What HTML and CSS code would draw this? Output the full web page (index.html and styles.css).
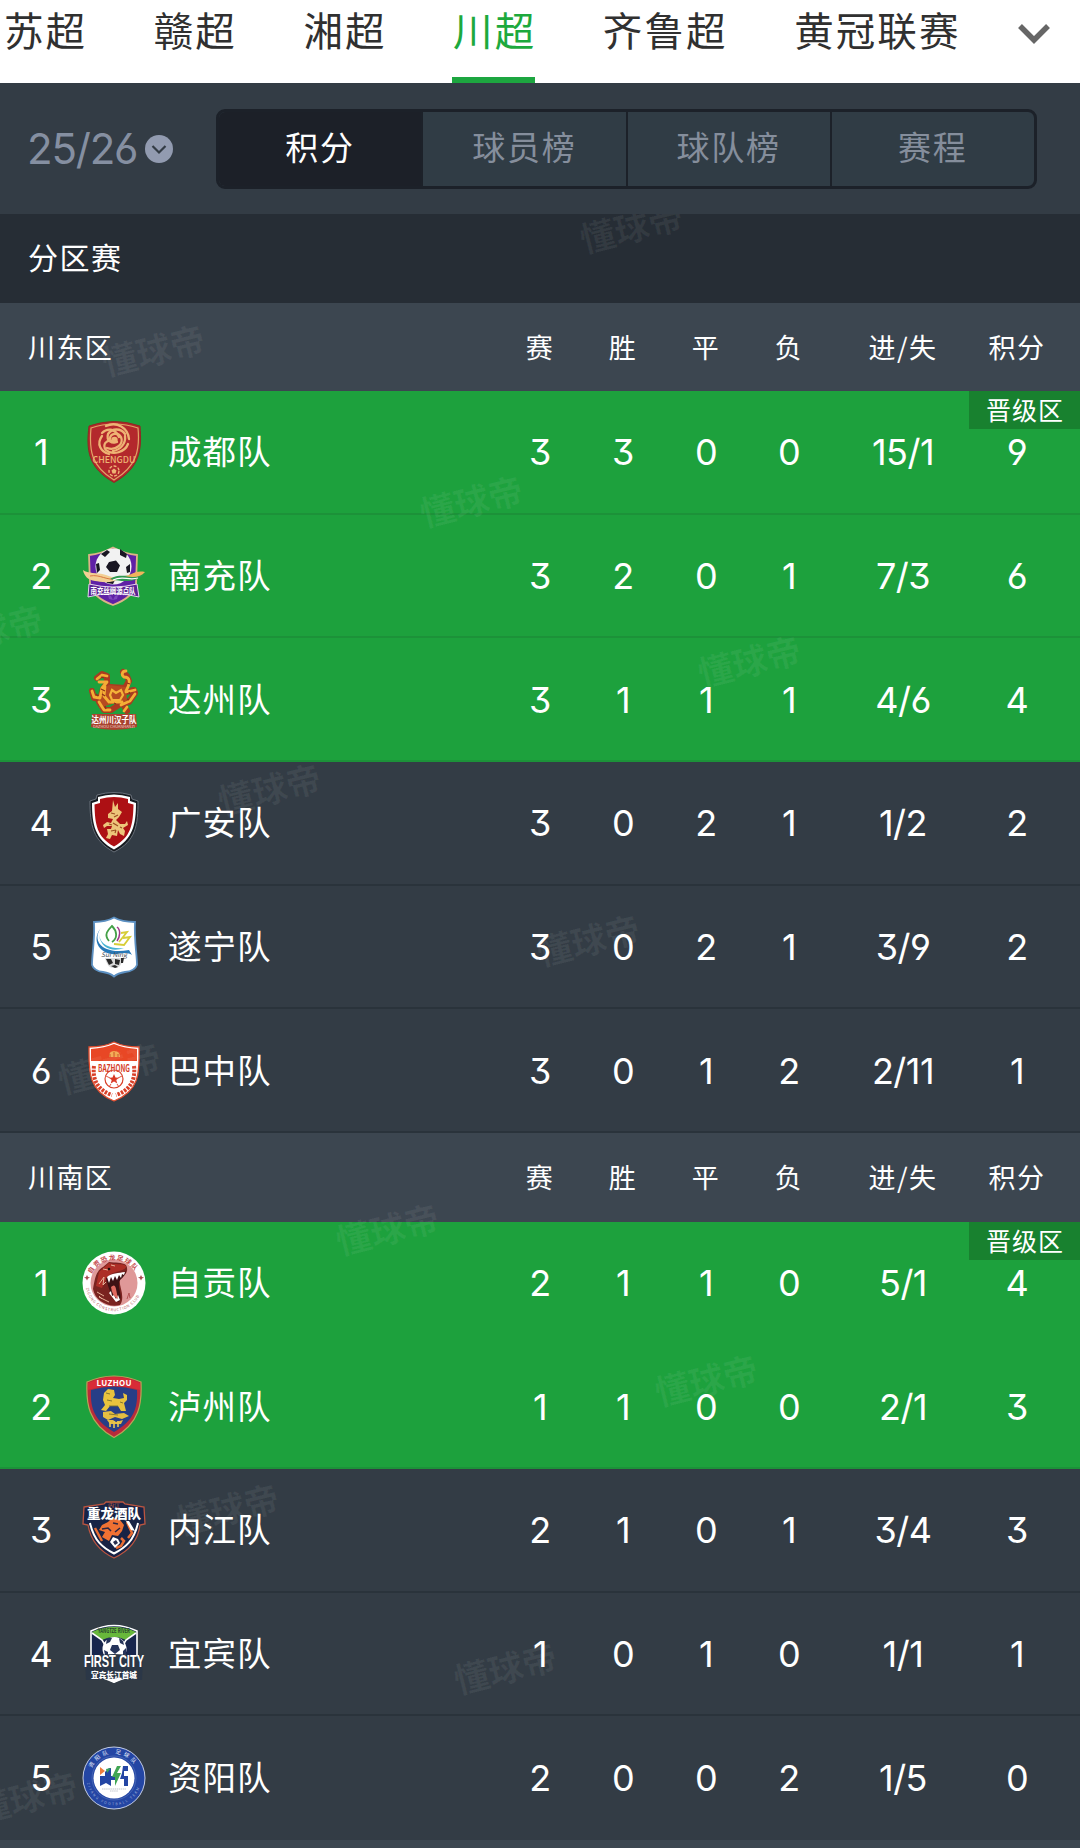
FILE: index.html
```html
<!DOCTYPE html>
<html lang="zh-CN">
<head>
    <meta charset="UTF-8" />
    <title>川超积分榜</title>
    <link rel="stylesheet" href="styles.css">
</head>
<body>

    <nav class="tabs">
        <a class="tab">苏超</a>
        <a class="tab">赣超</a>
        <a class="tab">湘超</a>
        <a class="tab active">川超</a>
        <a class="tab">齐鲁超</a>
        <a class="tab">黄冠联赛</a>
        <svg class="more" viewBox="0 0 34 22"><path d="M3 3 L17 17 L31 3" fill="none" stroke="#666" stroke-width="5.5" /></svg>
    </nav>

    <div class="filter">
        <div class="season">
            <span>25/26</span>
            <svg viewBox="0 0 28 28"><circle cx="14" cy="14" r="14" fill="#929bb0" /><path d="M7.5 11 L14 17.5 L20.5 11" fill="none" stroke="#333c45" stroke-width="2.2" /></svg>
        </div>
        <div class="segment">
            <span class="on">积分</span>
            <span>球员榜</span>
            <span>球队榜</span>
            <span>赛程</span>
        </div>
    </div>

    <main class="board">
        <h2 class="stage">分区赛</h2>

        <section class="group">
            <div class="head">
                <span class="zone">川东区</span>
                <span>赛</span><span>胜</span><span>平</span><span>负</span><span>进/失</span><span>积分</span>
            </div>

            <div class="row up">
                <span class="rank">1</span>
                <svg class="crest" viewBox="0 0 64 64">
                    <path d="M7 6 Q32 -3 58 6 C60 30 58 48 32 62.5 C6 48 4 30 7 6Z" fill="#b3282c" stroke="#8e2a22" />
                    <path d="M9 8 Q32 0 56 8 C58 30 55 46 32 60 C9 46 7 30 9 8Z" fill="none" stroke="#e0a467" stroke-width="1.2" />
                    <g fill="none" stroke="#eeb374" stroke-width="2.3" stroke-linecap="round">
                        <path d="M28 19 C28 13 36 12 39 17 C42 24 34 31 25 28" />
                        <path d="M35 22 C30 24 24 21 26 14 C30 8 39 8 43 14" />
                        <path d="M31 21 C24 19 20 25 24 30 C31 36 43 32 46 24" />
                        <path d="M37 17 C33 8 25 8 20 13" />
                        <path d="M20 16 C14 24 19 32 27 34" />
                        <path d="M24 6 C35 1 46 8 47 19" />
                        <path d="M43 16 C44 24 38 30 31 31" />
                    </g>
                    <circle cx="32.5" cy="20" r="3.2" fill="#eeb374" />
                    <text x="32" y="43" font-size="9" font-weight="500" textLength="43" lengthAdjust="spacingAndGlyphs" fill="#eeb374">CHENGDU</text>
                    <circle cx="32" cy="51" r="5" fill="none" stroke="#eeb374" stroke-width="1.4" stroke-dasharray="3 1.5" />
                    <path d="M32 48.5 l2.5 2 -1 3 h-3 l-1 -3z" fill="#eeb374" />
                </svg>
                <span class="name">成都队</span>
                <span>3</span><span>3</span><span>0</span><span>0</span><span>15/1</span><span>9</span>
                <em class="badge">晋级区</em>
            </div>

            <div class="row up">
                <span class="rank">2</span>
                <svg class="crest" viewBox="0 0 64 64">
                    <path d="M7 11 Q19 10 31 3.500 Q43 10 55 11 L54 40 Q52 53 31 61 Q10 53 8 40Z" fill="#5f20a6" stroke="#dcb487" stroke-width="1.8" />
                    <circle cx="31.5" cy="22.5" r="18" fill="#f2f2f2" />
                    <path d="M27 18 l7 -1.500 4 5 -3 6.500 -7 0 -4 -5z M19 10 l6 -4 3 2 -5 5z M38 5 l7 5 -1 4 -6 -3z M14 20 l3 -1 1 7 -3 3z M48 20 l-4 3 1 6 3 -1z M23 36 l6 -2 4 2 -2 4 -6 -1z" fill="#191622" />
                    <path d="M1 26 C6 30 14 28 24 31 C30 33 34 35 39 34 C30 40 19 38 13 37 C6 36 2 32 1 26Z" fill="#f2cf93" />
                    <path d="M8 32 C18 30 25 37 36 35" fill="none" stroke="#d97842" stroke-width="1" />
                    <path d="M28 35 C38 29 44 34 62 31 C55 37 44 39 28 35Z" fill="#2f9850" />
                    <path d="M43 32 C50 31 53 26 63 28 C59 33 52 34 43 32Z" fill="#f0b45c" />
                    <path d="M31 36 C41 31 46 37 56 34" fill="none" stroke="#fff" stroke-width="1.2" />
                    <path d="M7 40 Q31 46 55 40 L57 53 Q31 46 6 53Z" fill="#5a2493" stroke="#e6d4ef" stroke-width="1" />
                    <text x="31" y="49.5" font-size="8" font-weight="700" textLength="45" lengthAdjust="spacingAndGlyphs" fill="#fff">南充丝绸源点队</text>
                    <path d="M26 51 l3 1 2 4 -4 -1z M36 51 l-3 1 -2 4 4 -1z" fill="#7c45bd" />
                </svg>
                <span class="name">南充队</span>
                <span>3</span><span>2</span><span>0</span><span>1</span><span>7/3</span><span>6</span>
            </div>

            <div class="row up">
                <span class="rank">3</span>
                <svg class="crest" viewBox="0 0 64 64">
                    <g fill="none" stroke="#a93b20" stroke-width="6" stroke-linecap="round" stroke-linejoin="round">
                        <path d="M15 10 L20 6 L25 8 L25 15 L21 21 L18 31 L12 30 L10 23" />
                        <path d="M24 24 L28 19 L43 20 L47 13 L45 8 L41 4 M44 24 L52 22 L53 25 L47 34 L41 36 L45 43 M17 34 L22 42 L29 42 L40 35" />
                    </g>
                    <path d="M17 25 L27 17 L44 19 L45 33 L30 36 L17 40Z" fill="#b64a20" />
                    <g fill="none" stroke="#f4ae35" stroke-width="2.8" stroke-linecap="round" stroke-linejoin="round">
                        <path d="M15 11 L20 7 L25 8 M17 14 L25 14 L20 20 L18 30 L12 29 L10 23 M23 18 L22 28 L27 34" />
                        <path d="M44 23 C49 14 48 9 42 9 C39 7 40 3 44 3" />
                        <path d="M44 24 L53 22 M53 26 L48 33 L39 37 M45 39 L42 43 M17 34 L22 42 L28 42 M28 34 L40 34" />
                    </g>
                    <path d="M30 22 l4 3 5 -3 2 5 -3 5 -8 0 -2 -5z" fill="none" stroke="#f4b239" stroke-width="2.2" />
                    <path d="M19 9 l3 1 M19 21 l4 2 M20 26 l3 2 M14 26 l2 2 M47 24 l1 2 M45 15 l3 1 M32 35 l2 1 M23 38 l1 3 M45 31 l2 1" stroke="#8e3218" stroke-width="1.3" />
                    <path d="M10 46 H54 L55 59 Q32 65 9 59Z" fill="#a9432f" />
                    <text x="32" y="54.5" font-size="9" font-weight="700" textLength="45" lengthAdjust="spacingAndGlyphs" fill="#fff">达州川汉子队</text>
                    <text x="32" y="60" font-size="3.5" textLength="42" lengthAdjust="spacingAndGlyphs" fill="#f0d5cc">DAZHOU CHUANHANZI</text>
                </svg>
                <span class="name">达州队</span>
                <span>3</span><span>1</span><span>1</span><span>1</span><span>4/6</span><span>4</span>
            </div>

            <div class="row">
                <span class="rank">4</span>
                <svg class="crest" viewBox="0 0 64 64">
                    <path d="M15 4 Q32 -1 49 4 L50 8 L56 10 C56 34 54 50 32 61 C11 50 8 34 8 10 L14 8Z" fill="#171b20" stroke="#78808a" stroke-width=".8" />
                    <path d="M16 6 Q32 1 48 6 L48 10 L54 12 C54 34 51 48 32 58.500 C13 48 10 34 10 12 L16 10Z" fill="#fff" />
                    <path d="M18 8 Q32 4 46 8 L46 12 L51.500 13.500 C51 34 49 46 32 55.500 C15 46 13 34 12.500 13.500 L18 12Z" fill="#ad1014" />
                    <path d="M31 9 L33 16 L36 12 L36 18 L40 21 L37 26 L34 29 L38 33 L43 33 L45 30 L46 34 L41 37 L43 40 L42 45 L38 43 L36 39 L35 45 L30 44 L28 48 L24 47 L26 43 L25 38 L29 38 L30 35 L25 35 L22 37 L21 34 L25 31 L29 32 L31 28 L26 27 L26 23 L30 20Z" fill="#edc57a" />
                    <path d="M29 22 l4 1 M32 26 l4 -2 M31 32 l5 3 M29 40 l5 -1 M27 33 l3 1 M38 36 l2 1 M33 42 l1 -3" stroke="#9a4d20" stroke-width="1.2" />
                </svg>
                <span class="name">广安队</span>
                <span>3</span><span>0</span><span>2</span><span>1</span><span>1/2</span><span>2</span>
            </div>

            <div class="row">
                <span class="rank">5</span>
                <svg class="crest" viewBox="0 0 64 64">
                    <path d="M12 7 Q24 7 32 2.500 Q40 7 53 7 C52 26 55 39 55 50 Q53 56 43 57 Q36 58 32 61.500 Q28 58 21 57 Q12 56 10 50 C10 38 13 25 12 7Z" fill="#fff" stroke="#5c90c2" stroke-width="1.8" />
                    <path d="M19 13 C9 26 21 40 47 35 L50 40 C43 35 36 41 27 38.500 C14 35 11 22 19 13Z" fill="#2879b8" />
                    <path d="M17 20 C19 31 30 34 42 33 C31 37 19 34 17 20Z" fill="#45b2d3" />
                    <path d="M27 26 C21 19 27 14 30 11 C35 16 36 23 30 27" fill="none" stroke="#43a047" stroke-width="1.8" />
                    <path d="M35 12 C39 15 38 22 35 26" fill="none" stroke="#a0358a" stroke-width="1.5" />
                    <path d="M39 18 L45 17 L37 27 M41 23 L48 22 L42 30 L32 29" fill="none" stroke="#d6cd37" stroke-width="1.8" />
                    <text x="32" y="42" font-size="6.5" font-style="italic" textLength="26" lengthAdjust="spacingAndGlyphs" fill="#4a5058">Sui Ning</text>
                    <path d="M23 43 H41 Q40 53 32 53 Q25 53 23 43Z" fill="#dadada" />
                    <path d="M24 44 l5 0 2 4 -4 2z M33 44 l5 1 -1 5 -4 -1z M39 43 l3 0 -1 5 -2 0z M29 51 l4 -1 3 2 -3 1z" fill="#292929" />
                </svg>
                <span class="name">遂宁队</span>
                <span>3</span><span>0</span><span>2</span><span>1</span><span>3/9</span><span>2</span>
            </div>

            <div class="row">
                <span class="rank">6</span>
                <svg class="crest" viewBox="0 0 64 64">
                    <path d="M7 8 Q22 8 32 3 Q42 8 57 8 C57 30 60 51 32 62 C5 51 7 30 7 8Z" fill="#fff" stroke="#e34c2c" stroke-width="1.3" />
                    <path d="M9 10 Q23 9 32 5 Q41 9 55 10 L55 22 H9Z" fill="#e84725" />
                    <path d="M27 18 q0 -6 5 -6 q6 0 6 6z" fill="#f3a84f" />
                    <path d="M28 18 v-3 M32 18 v-5 M36 18 v-3" stroke="#bd3d20" stroke-width=".8" />
                    <circle cx="32" cy="40" r="9" fill="#fff" stroke="#d94028" stroke-width="1.2" />
                    <text x="32" y="33" font-size="10" font-weight="700" textLength="32" lengthAdjust="spacingAndGlyphs" fill="#d53c25">BAZHONG</text>
                    <path d="M32 35 l1.500 3.500 3.500 .3 -2.700 2.200 1 3.600 -3.300 -2 -3.300 2 1 -3.600 -2.700 -2.200 3.500 -.3z" fill="#d93622" />
                    <path d="M24 37 l4 2 M40 37 l-4 2 M27 48 l2 -3 M37 48 l-2 -3" stroke="#d94028" stroke-width=".9" />
                    <path d="M12 27 C10 43 18 52 30 56 M52 27 C54 43 46 52 34 56" fill="none" stroke="#d94028" stroke-width="4" stroke-dasharray="2.5 1.2" />
                </svg>
                <span class="name">巴中队</span>
                <span>3</span><span>0</span><span>1</span><span>2</span><span>2/11</span><span>1</span>
            </div>
        </section>

        <section class="group">
            <div class="head">
                <span class="zone">川南区</span>
                <span>赛</span><span>胜</span><span>平</span><span>负</span><span>进/失</span><span>积分</span>
            </div>

            <div class="row up plain">
                <span class="rank">1</span>
                <svg class="crest" viewBox="0 0 64 64">
                    <circle cx="32" cy="32" r="31.5" fill="#fff" />
                    <circle cx="32" cy="32" r="23.5" fill="#df9898" />
                    <path id="zgTop" d="M9.500 23 A25 25 0 0 1 54.500 23" fill="none" />
                    <path id="zgBottom" d="M4 37 A28.500 28.500 0 0 0 60 37" fill="none" />
                    <text class="arc" font-size="6.5" font-weight="700" fill="#c4494a"><textPath href="#zgTop" textLength="52">自贡恐龙足球队</textPath></text>
                    <text class="arc" font-size="3.8" fill="#b65555"><textPath href="#zgBottom" textLength="70">ZIGONG CONSTRUCTION CLUB</textPath></text>
                    <path d="M5 24 l1 2 2 .5 -2 1 -1 2 -1 -2 -2 -1 2 -.5z M59 24 l1 2 2 .5 -2 1 -1 2 -1 -2 -2 -1 2 -.5z" fill="#a94a4d" />
                    <path d="M11 38 C13 27 14 20 21 16 L27 11 C33 12 40 11 44 14 C47 19 44 25 38 27 C36 35 44 45 38 54 C27 57 13 50 11 38Z" fill="#7a2320" />
                    <path d="M17 21 L27 12 C33 14 40 12 44 15 C45 19 36 20 29 23 C24 26 22 33 20 37 L14 35Z" fill="#ad2e26" />
                    <path d="M24 27 C31 25 39 25 44 20 C43 26 38 28 37 31 C36 38 41 46 37 51 C30 49 26 36 24 27Z" fill="#3e1214" />
                    <path d="M25 26 l2 6 2 -6 2 4 2 -5 2 4 2 -5 2 3 1 -4 2 1 1 -3 C37 22 29 22 25 26Z M27 42 l2 -2 1 5 2 -1 2 4 2 -4 2 5 -4 2z" fill="#fff" />
                    <path d="M29 36 q4 -4 5 2 l2 10 q-6 -3 -7 -12z" fill="#e06a60" />
                    <path d="M17 33 l5 -7 -1 8 3 -3 M15 41 l7 4 M17 46 l10 5 M20 48 l-3 -3 M21 18 l5 1 M29 14 l4 1" fill="none" stroke="#e6b298" stroke-width="1" />
                    <circle cx="27" cy="18" r="1.3" fill="#1d0d0d" />
                    <path d="M45 48 l2 -6 1 5" fill="none" stroke="#b65555" />
                </svg>
                <span class="name">自贡队</span>
                <span>2</span><span>1</span><span>1</span><span>0</span><span>5/1</span><span>4</span>
                <em class="badge">晋级区</em>
            </div>

            <div class="row up">
                <span class="rank">2</span>
                <svg class="crest" viewBox="0 0 64 64">
                    <path d="M5 7 Q32 -5 59 7 C60 28 58 48 32 62.500 C6 48 4 28 5 7Z" fill="#b92b3a" stroke="#b9a557" stroke-width="1.2" />
                    <path d="M9 15 Q32 8 55 15 C56 34 51 46 32 57 C13 46 8 34 9 15Z" fill="#273e87" />
                    <path d="M6 8 Q32 -4 58 8 L58 15 Q32 7 6 15Z" fill="#d82c37" />
                    <text x="32" y="11" font-size="8" font-weight="700" textLength="35" fill="#fff">LUZHOU</text>
                    <path d="M22 18 l4 -4 6 1 1 5 -2 3 6 1 5 -1 -1 -5 4 2 0 5 -3 3 2 8 -5 0 -3 -5 -8 0 -4 5 -5 -1 4 -5 -2 -5z" fill="#e9c33e" />
                    <path d="M21 37 l8 -1 4 3 9 -1 5 3 -7 3 -7 -2 -7 3 -5 -3z M25 45 l6 0 3 2 7 -2 -2 4 -11 0z" fill="#e5bd41" />
                    <path d="M28 47 v5 M32 46 v7 M36 46 v6" stroke="#e8c654" stroke-width="1.6" />
                    <path d="M24 18 l4 1 M25 25 l5 1 M27 31 l9 0 M38 27 l3 1 M27 39 l9 1" stroke="#79702c" stroke-width=".9" />
                </svg>
                <span class="name">泸州队</span>
                <span>1</span><span>1</span><span>0</span><span>0</span><span>2/1</span><span>3</span>
            </div>

            <div class="row">
                <span class="rank">3</span>
                <svg class="crest" viewBox="0 0 64 64">
                    <path d="M2 9 L22 6 L24 4 H41 L43 6 L62 9 L63 26 L58 27 C56 44 45 54 32 60 C19 54 9 44 6 27 L1 26Z" fill="#182345" stroke="#bb5540" stroke-width="1.3" />
                    <path d="M8 25 C12 43 21 50 32 55.500 C43 50 52 43 56 25" fill="none" stroke="#fff" stroke-width="2" />
                    <path d="M17 32 L20 27 L26 24 L30 20 L38 22 L42 27 L40 33 L36 38 L30 37 L27 43 L20 39 L23 34Z" fill="#ef7133" />
                    <path d="M13 30 L20 43 M39 40 l3 3 -3 5 -5 2 M45 24 l5 11 -4 5" fill="none" stroke="#e96d34" stroke-width="2.5" />
                    <path d="M20 31 l6 -1 3 3 M31 25 l5 1 M33 34 l5 -4" fill="none" stroke="#2b2542" stroke-width="1.6" />
                    <path d="M28 44 l3 -5 5 2 2 4 -5 5z M44 23 l3 0 6 10 -4 -1z" fill="#fff" />
                    <path d="M31 44 l3 -2 2 3 -3 2z" fill="#272d4c" />
                    <text x="32" y="8.5" font-size="4.5" textLength="12" lengthAdjust="spacingAndGlyphs" fill="#d4634b">内江</text>
                    <text x="32" y="20" font-size="13" font-weight="900" textLength="54" lengthAdjust="spacingAndGlyphs" fill="#fff">重龙酒队</text>
                </svg>
                <span class="name">内江队</span>
                <span>2</span><span>1</span><span>0</span><span>1</span><span>3/4</span><span>3</span>
            </div>

            <div class="row">
                <span class="rank">4</span>
                <svg class="crest" viewBox="0 0 64 64">
                    <path d="M9 9 Q32 -2 55 9 L55 48 Q45 53 32 60 Q19 53 9 48Z" fill="#18264d" stroke="#fff" stroke-width="1.6" />
                    <path d="M10 10 Q32 0 54 10 L44 18 Q32 12 20 18Z" fill="#68b83b" />
                    <path d="M10 11 L20 18 L23 23 M54 11 L44 18 L41 23" fill="none" stroke="#fff" stroke-width="1.6" />
                    <text x="32" y="11" font-size="6" font-weight="700" textLength="32" lengthAdjust="spacingAndGlyphs" fill="#27462e">YANGTZE RIVER</text>
                    <circle cx="32.5" cy="27" r="12" fill="#fff" />
                    <path d="M30 23 l6 0 2 5 -5 4 -5 -4z M25 16 l5 0 -2 4 -4 2z M37 16 l4 3 1 4 -4 -2z M22 28 l4 2 0 5 -3 -2z M41 29 l3 -3 0 6 -3 2z" fill="#26345a" />
                    <path d="M3 35 Q32 29 61 35 L60 58 H4Z" fill="#2b3747" />
                    <text class="condensed" x="32" y="45" font-size="17" font-weight="700" textLength="60" lengthAdjust="spacingAndGlyphs" fill="#fff">FIRST CITY</text>
                    <text x="32" y="55.5" font-size="8" font-weight="900" textLength="46" lengthAdjust="spacingAndGlyphs" fill="#fff">宜宾长江首城</text>
                    <path d="M22 57 H42 L32 61Z" fill="#fff" />
                </svg>
                <span class="name">宜宾队</span>
                <span>1</span><span>0</span><span>1</span><span>0</span><span>1/1</span><span>1</span>
            </div>

            <div class="row">
                <span class="rank">5</span>
                <svg class="crest" viewBox="0 0 64 64">
                    <circle cx="32" cy="32" r="31" fill="#2446a4" stroke="#c4cde5" stroke-width="1" />
                    <circle cx="32" cy="32" r="20.5" fill="#fff" />
                    <circle cx="32" cy="32" r="22" fill="none" stroke="#5a78bf" stroke-width=".6" />
                    <path id="zyTop" d="M10 22 A24 24 0 0 1 54 22" fill="none" />
                    <path id="zyBottom" d="M5 37 A27.500 27.500 0 0 0 59 37" fill="none" />
                    <text class="arc" font-size="5.5" fill="#e9eefb"><textPath href="#zyTop" textLength="51">资阳队 足球队</textPath></text>
                    <text class="arc" font-size="3.4" fill="#a6b7df"><textPath href="#zyBottom" textLength="70">ZIYANG FOOTBALL TEAM</textPath></text>
                    <path d="M18 21 L23 25 L18 29Z" fill="#ee7e3d" />
                    <path d="M18 30 H23 V26 L27 22 H29 V30 H33 V34 H29 V40 L24 37 L18 40Z" fill="#2446a4" />
                    <path d="M24 23 l5 -1 -4 5z" fill="#3ba55b" />
                    <path d="M35 20 H39 L35 27 H39 L33 40 V31 H30Z" fill="#41a654" />
                    <path d="M41 20 H46 V25 H42 V30 H46 V40 H42 V33 H38 L40 27Z" fill="#2446a4" />
                    <path d="M20 43 H44 M28 45 H36" stroke="#a8adb6" stroke-width=".7" stroke-dasharray="1.5 .6" />
                </svg>
                <span class="name">资阳队</span>
                <span>2</span><span>0</span><span>0</span><span>2</span><span>1/5</span><span>0</span>
            </div>
        </section>

        <!-- 水印 -->
        <div class="marks">
            <i style="left: 631px; top: 12px">懂球帝</i>
            <i style="left: 153px; top: 135px">懂球帝</i>
            <i style="left: 471px; top: 286px">懂球帝</i>
            <i style="left: -9px; top: 415px">懂球帝</i>
            <i style="left: 749px; top: 446px">懂球帝</i>
            <i style="left: 269px; top: 574px">懂球帝</i>
            <i style="left: 588px; top: 725px">懂球帝</i>
            <i style="left: 109px; top: 853px">懂球帝</i>
            <i style="left: 387px; top: 1014px">懂球帝</i>
            <i style="left: 706px; top: 1165px">懂球帝</i>
            <i style="left: 227px; top: 1294px">懂球帝</i>
            <i style="left: 505px; top: 1453px">懂球帝</i>
            <i style="left: 26px; top: 1582px">懂球帝</i>
        </div>
    </main>

</body>
</html>
```
FILE: styles.css
```css
* {
    box-sizing: border-box;
}

body {
    margin: 0;
    height: 1848px;
    display: flex;
    flex-direction: column;
    overflow: hidden;
    font-family: Inter, "Noto Sans CJK SC", sans-serif;
    font-feature-settings: "cv03", "cv04", "cv09";
    background: #3c4650;
    color: #fff;
}

/* 顶部联赛切换 */
.tabs {
    flex: none;
    display: flex;
    gap: 66.5px;
    height: 82.5px;
    padding-left: 3px;
    background: #fff;
}

.tab {
    position: relative;
    height: 100%;
    padding-left: 1px;
    font: 400 39.5px/58px "Noto Sans CJK SC", sans-serif;
    letter-spacing: 2.1px;
    margin-right: -1px;
    white-space: nowrap;
    color: #303030;
}

    .tab.active {
        color: #1da93d;
    }

    .tab.active::after {
        content: "";
        position: absolute;
        left: 0;
        right: 1px;
        bottom: 0;
        height: 6px;
        background: #1da640;
    }

.more {
    width: 34px;
    height: 22px;
    margin: 23px 0 0 -9px;
}

/* 赛季 + 子导航 */
.filter {
    flex: none;
    display: flex;
    align-items: center;
    height: 131.5px;
    padding: 1px 43px 0 27px;
    background: #333c45;
}

.season {
    display: flex;
    align-items: center;
    gap: 9px;
    width: 189px;
    font-size: 42px;
    font-weight: 400;
    letter-spacing: -1.2px;
    color: #858fa1;
}

    .season span {
        width: 109px;
        white-space: nowrap;
    }

    .season svg {
        width: 28px;
        height: 28px;
    }

.segment {
    flex: 1;
    display: flex;
    height: 80px;
    border: 3px solid #1c2129;
    border-radius: 9px;
    background: #303c45;
    overflow: hidden;
}

    .segment span {
        flex: 1;
        font: 400 33px/69px "Noto Sans CJK SC", sans-serif;
        letter-spacing: 1.8px;
        text-align: center;
        color: #858e9c;
        border-right: 2px solid #1c2129;
    }

    .segment span:last-child {
        border-right: none;
    }

    .segment .on {
        background: #1c2028;
        color: #fff;
    }

/* 积分榜 */
.board {
    flex: 1;
    position: relative;
    overflow: hidden;
}

.stage {
    height: 88.5px;
    margin: 0;
    padding-left: 28px;
    font: 400 30px/84px "Noto Sans CJK SC", sans-serif;
    letter-spacing: 1.5px;
    background: #262d35;
}

.head,
.row {
    display: grid;
    grid-template-columns: 82px 64px 352.5px repeat(4, 83px) 145px 83px;
    align-items: center;
    text-align: center;
}

.head {
    height: 88.5px;
    font: 400 27px/84px "Noto Sans CJK SC", sans-serif;
    letter-spacing: 1.4px;
    background: #3c4650;
}

.zone {
    grid-column: span 3;
    padding-left: 28px;
    text-align: left;
}

.row {
    position: relative;
    height: 123.7px;
    padding-top: 1px;
    font-size: 36px;
    letter-spacing: -0.5px;
    background: #333c45;
    border-bottom: 2px solid #2a333b;
}

    .row:last-child {
        border-bottom-color: #333c45;
    }

.group:nth-of-type(1) .row:last-child {
    border-bottom-color: #2a333b;
}

.row.up {
    background: #1da13d;
    border-bottom-color: #1c9239;
}

    .row.up.plain {
        border-bottom-color: #1da13d;
    }

.crest {
    width: 64px;
    height: 64px;
    font-family: "Noto Sans CJK SC", sans-serif;
    letter-spacing: 0;
    text-anchor: middle;
}

    .crest .arc {
        text-anchor: start;
    }

    .crest .condensed {
        font-family: "Liberation Sans", sans-serif;
    }

.name {
    padding-left: 22px;
    font: 400 33.5px/60px "Noto Sans CJK SC", sans-serif;
    letter-spacing: 1px;
    text-align: left;
    margin-top: -4px;
}

.badge {
    position: absolute;
    top: 0;
    right: 0;
    width: 111px;
    height: 38px;
    padding-left: 17px;
    font: 400 25px/36px "Noto Sans CJK SC", sans-serif;
    letter-spacing: 1px;
    text-align: left;
    background: #18812f;
}

.marks i {
    position: absolute;
    font: 700 35px/40px "Noto Sans CJK SC", sans-serif;
    white-space: nowrap;
    color: rgba(255, 255, 255, 0.06);
    transform: translate(-50%, -50%) rotate(-14deg);
}
```
